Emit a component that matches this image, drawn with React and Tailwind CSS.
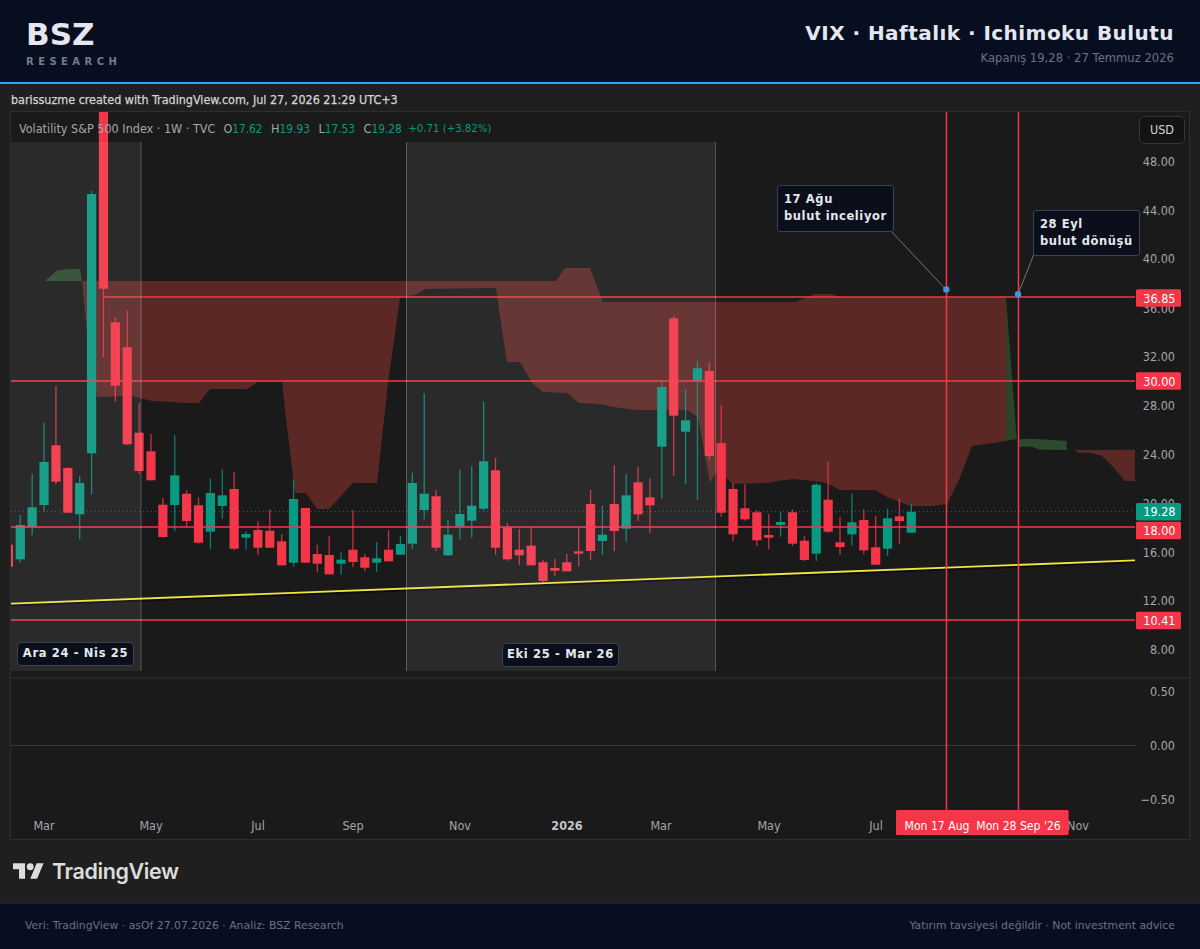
const C = [
["r",544.7,566.7,544.7,566.7,-1],
["g",525,559.3,515,562.7],["g",507.3,527,474,535],["g",462,505,422.7,511.7],["r",445.3,481.7,386,484.3],["r",468,512.7,467.3,512.7],["g",483,514.3,476,539.3],["g",194,453.3,190.7,494.3],["r",100,288.7,100,357.3],["r",322.3,385.7,317.3,401.7],["r",347.3,444.3,310.7,445],
["r",432.7,471,403,474],["r",451.3,480.3,434,480.3],["r",504.7,537,498,537.7],["g",475.3,505,435.3,531.3],["r",493.7,521,490.3,526.7],["r",505.3,542.7,497.3,543.7],["g",493,531.7,478.7,548.7],["g",495.3,506,469.3,518.7],["r",489,548.7,472,550.3],["g",534,537.7,531.3,549.3],
["r",530,547.7,521.3,555.3],["r",530.7,547.7,509.3,547.7],["r",541.3,565.3,534,565.3],["g",499,562.7,479.3,566.7],["r",508,562.7,508,562.7],["r",554,563.7,544.7,572],["r",555,574.3,536,574.3],["g",559.7,563.7,552.3,574.7],["r",549.7,562,510,567],["r",557.3,567.7,554,571.3],
["g",558.3,562.7,542,572],["r",549.7,561.3,530,561.3],["g",544,554.7,536,554.7],["g",483,543.7,472.7,549.3],["g",493.7,510,393.3,519.3],["r",496.3,547.7,490,551],["g",534.7,555.3,520,556],["g",514,526.7,469.3,539.7],["g",505.7,520.7,466,537.7],["g",461.3,508.7,401.7,510.7],
["r",470.3,547.7,457.7,554.7],["r",527.3,559.3,523.3,560.7],["r",549.7,555.3,529,565.3],["r",545.7,565.3,527.3,565.3],["r",562.3,581,560,584],["r",568,570.7,558.7,576],["r",562.3,571.3,554,571.3],["r",551.3,553.7,527.3,566.7],["r",504,551,490,560.3],["g",534.7,541,506,554.7],
["r",504,531,465.3,551],["g",495.3,528.7,474,541.7],["r",482.3,514.3,467,521],["r",497.3,505.3,478.3,532.7],["g",387,446.7,382,498.7],["r",318.3,415.7,316,475.7],["g",420.3,431.7,389.3,484.3],["g",368.3,380.7,361,499.7],["r",371,456,362.7,460],["r",443,512.7,405,516.7],
["r",489,534.3,483.3,541],["r",508.3,519.3,484,520.7],["r",512.3,540.3,510,546],["r",535,537.7,514,549.3],["g",522,525,511.7,536.7],["r",512.3,543.7,509.3,546],["r",540.7,560,536,561],["g",484.7,553.7,483.3,561],["r",499.7,531.7,462,532.7],["r",542.3,547,517,554.7],
["g",522.3,534.3,493.7,545.3],["r",520,550.3,509.3,553.7],["r",547.3,564.7,516,564.7],["g",518.3,548.7,508.7,556],["r",516.3,521,498.7,543.7],["g",511.7,532.7,504,532.7],
];

const CLOUD_RED = "82,281 556,281 565,268 590,268 603,302 795,302 815,294 832,294 840,297 1006,297 1006,441 972,446 959,480 947,504 933,506 910,506 900,502 887,497 875,490 840,490 827,483 813,481 793,479 777,481 767,483 733,484 717,470 710,483 698,417 687,410 637,410 613,407 600,404 579,403 567,393 543,392 532,383 520,362 507,362 500,317 496,288 425,289 415,295 407,296 400,298 388,383 377,483 353,483 329,509 317,509 306,493 295,493 285,410 282,382 258,382 247,389 210,389 199,403 185,403 173,402 152,401 140,398 132,396 97,397 88,343";

const AXIS = [["48.00",161],["44.00",210],["40.00",258],["36.00",308],["32.00",356],["28.00",405],["24.00",454],["20.00",503],["16.00",552],["12.00",600],["8.00",649],["0.50",691],["0.00",745],["−0.50",799]];
const TAGS = [["36.85",298,"#f53648"],["30.00",381,"#f53648"],["19.28",511.7,"#089981"],["18.00",530.5,"#f53648"],["10.41",620.5,"#f53648"]];
const TIME = [["Mar",44],["May",151],["Jul",258],["Sep",353],["Nov",460],["Mar",661],["May",769],["Jul",876],["Nov",1078]];
const HLINES = [[104,297],[11,381],[11,527],[11,620]];

function Candles() {
  return C.map((c, n) => {
    const x = 20.3 + 11.88 * (n - 1);
    const col = c[0] === "g" ? "#089981" : "#f53648";
    return (
      <g key={n}>
        <rect x={x - 0.65} y={c[3]} width={1.3} height={c[4] - c[3]} fill={col} opacity={0.8} />
        <rect x={x - 4.6} y={c[1]} width={9.2} height={c[2] - c[1]} fill={col} />
      </g>
    );
  });
}

function Plot() {
  return (
    <svg width="1178" height="727" viewBox="11 112 1178 727" className="block">
      <defs>
        <clipPath id="plot"><rect x="11" y="112" width="1124" height="566" /></clipPath>
      </defs>
      <g clipPath="url(#plot)">
        <polygon points="45,281 56.7,270.7 68,269 80,269 82,281" fill="#2d4a2f" />
        <polygon points={CLOUD_RED} fill="#5c2825" />
        <polygon points="1006,297 1016.7,439 1006,441" fill="#2b4429" />
        <polygon points="602,298 795,298 795,302 602,302" fill="#1c1c1c" />
        <polygon points="1018,439.3 1033,438.7 1066.7,441 1066.7,450 1040,449.7 1031.7,446.7 1018,446.7" fill="#2d4a2f" />
        <polygon points="1066.7,441 1076,450 1135,449.7 1135,481 1125,481 1113,466.7 1101.7,455.7 1090,452.7 1078,452.7" fill="#5c2825" />
        <Candles />
        <line x1="11" y1="511.7" x2="1135" y2="511.7" stroke="#089981" strokeWidth="1" strokeDasharray="1 3" opacity="0.8" />
        <line x1="11" y1="604.8" x2="1135" y2="561.5" stroke="#000" strokeWidth="3.5" opacity="0.55" />
        <line x1="11" y1="603.7" x2="1135" y2="560.4" stroke="#f1e63f" strokeWidth="1.8" />
        {HLINES.map(([x, y]) => (
          <line key={y} x1={x} y1={y} x2="1135" y2={y} stroke="#f53648" strokeWidth="1.6" />
        ))}
        <rect x="11" y="142" width="130" height="529" fill="#eef3ff" opacity="0.075" />
        <rect x="406" y="142" width="309.5" height="529" fill="#eef3ff" opacity="0.075" />
        <line x1="141" y1="142" x2="141" y2="671" stroke="#fff" strokeOpacity="0.24" />
        <line x1="406.5" y1="142" x2="406.5" y2="671" stroke="#fff" strokeOpacity="0.24" />
        <line x1="715.5" y1="142" x2="715.5" y2="671" stroke="#fff" strokeOpacity="0.24" />
      </g>
      <line x1="11" y1="678" x2="1189" y2="678" stroke="#333" />
      <line x1="11" y1="745.5" x2="1135" y2="745.5" stroke="#3a3a3a" />
      <line x1="946.5" y1="112" x2="946.5" y2="810" stroke="#f53648" strokeWidth="1.5" />
      <line x1="1018.5" y1="112" x2="1018.5" y2="810" stroke="#f53648" strokeWidth="1.5" />
      <line x1="889" y1="229" x2="946" y2="289.5" stroke="#8a8d94" strokeWidth="0.8" />
      <line x1="1034" y1="254" x2="1018" y2="294" stroke="#8a8d94" strokeWidth="0.8" />
      <circle cx="946.3" cy="289.5" r="3.2" fill="#3f93df" />
      <circle cx="1018" cy="294.3" r="3.2" fill="#3f93df" />
      <g fontSize="12.5" fill="#a3a6ab">
        {AXIS.map(([t, y]) => (
          <text key={t} x="1175" y={y + 4.5} textAnchor="end">{t}</text>
        ))}
      </g>
      {TAGS.map(([t, y, col]) => (
        <g key={t}>
          <rect x="1136" y={y - 8.7} width="45" height="17.4" rx="1.5" fill={col} />
          <text x="1175.5" y={y + 4.5} textAnchor="end" fontSize="12.5" fontWeight="500" fill="#fff">{t}</text>
        </g>
      ))}
      <g fontSize="12.5" fill="#a3a6ab">
        {TIME.map(([t, x]) => (
          <text key={t + x} x={x} y="829.5" textAnchor="middle">{t}</text>
        ))}
        <text x="567" y="829.5" textAnchor="middle" fontWeight="700" fill="#c4c6ca">2026</text>
      </g>
      <rect x="896" y="810" width="172.6" height="25" rx="1.5" fill="#f53648" />
      <g fontSize="12.1" fill="#fff" textAnchor="middle">
        <text x="937" y="829.5">Mon 17 Aug</text>
        <text x="1018.5" y="829.5">Mon 28 Sep '26</text>
      </g>
    </svg>
  );
}

const noteCls = "absolute box-border rounded-[3px] border border-[#3a4150] bg-[#0a0f1b] px-[6px] pt-[5px] font-['DejaVu_Sans'] text-[11.5px] leading-[17px] font-bold tracking-[0.6px] text-[#e6e8ee]";
const rangeCls = "absolute box-border flex h-[24px] w-[117px] items-center justify-center rounded-[4px] border border-[#3a4150] bg-[#0a0f1b] font-['DejaVu_Sans'] text-[11.5px] font-bold tracking-[0.65px] whitespace-pre text-[#e6e8ee]";

export default function App() {
  return (
    <div className="flex h-[949px] w-[1200px] flex-col overflow-hidden bg-[#1f1f1f] font-['DejaVu_Sans',sans-serif]">
      <header className="box-border flex h-[84px] shrink-0 items-start justify-between border-b-2 border-[#3aa0ee] bg-[#070e20] pr-[26px] pl-[26px]">
        <div className="pt-[16px]">
          <div className="text-[31px] leading-[36px] font-bold text-[#e4e7ef]">BSZ</div>
          <div className="mt-[3px] text-[10px] leading-[14px] font-bold tracking-[4.45px] text-[#747b8d]">RESEARCH</div>
        </div>
        <div className="flex flex-col items-end pt-[20px]">
          <div className="text-[20px] leading-[26px] font-bold tracking-[0.45px] text-[#e4e7ef]">VIX · Haftalık · Ichimoku Bulutu</div>
          <div className="mt-[5px] text-[11.6px] leading-[14px] text-[#6b7280]">Kapanış 19,28 · 27 Temmuz 2026</div>
        </div>
      </header>

      <main className="flex flex-1 flex-col px-[10px] font-['DejaVu_Sans_Condensed','DejaVu_Sans',sans-serif]">
        <div className="h-[27px] pt-[8px] pl-[1px] text-[12.45px] leading-[16px] text-[#d4d4d4] [-webkit-text-stroke:0.25px_#d4d4d4]">barissuzme created with TradingView.com, Jul 27, 2026 21:29 UTC+3</div>
        <div className="relative box-border h-[729px] w-[1180px] border border-[#2e2e2e] bg-[#1a1a1a]">
          <Plot />
          <div className="absolute top-[9px] left-[8px] flex gap-[8px] text-[12.5px] leading-[16px] whitespace-pre text-[#a3a6ab]">
            <span>Volatility S&amp;P 500 Index · 1W · TVC</span>
            <span className="flex items-center gap-[8.5px]">
              <span>O<span className="text-[11.8px] text-[#089981]">17.62</span></span>
              <span>H<span className="text-[11.8px] text-[#089981]">19.93</span></span>
              <span>L<span className="text-[11.8px] text-[#089981]">17.53</span></span>
              <span>C<span className="text-[11.8px] text-[#089981]">19.28</span></span>
              <span className="-ml-[2px] text-[11.3px] text-[#089981]">+0.71 (+3.82%)</span>
            </span>
          </div>
          <div className="absolute top-[4px] left-[1128px] box-border flex h-[28px] w-[46px] items-center justify-center rounded-[5px] border border-[#343434] bg-[#131313] text-[12.5px] text-[#d4d4d4]">USD</div>
          <div className={noteCls + " top-[73px] left-[766px] h-[47px] w-[117px]"}>17 Ağu<br />bulut inceliyor</div>
          <div className={noteCls + " top-[98px] left-[1022px] h-[46px] w-[107px]"}>28 Eyl<br />bulut dönüşü</div>
          <div className={rangeCls + " top-[530px] left-[6px]"}>Ara 24 - Nis 25</div>
          <div className={rangeCls + " top-[531px] left-[491px]"}>Eki 25 - Mar 26</div>
        </div>
        <div className="flex items-center gap-[8px] pt-[18px] pl-[3px]">
          <svg width="31" height="18" viewBox="0 3 36 20" fill="#dcdcdc"><path d="M14 22H7V11H0V4h14v18zM28 22h-8l7.5-18h8L28 22z" /><circle cx="20" cy="8" r="4" /></svg>
          <span className="font-['Inter'] text-[21.5px] leading-[26px] font-semibold tracking-[-0.4px] text-[#dcdcdc]">TradingView</span>
        </div>
      </main>

      <footer className="box-border flex h-[46px] shrink-0 items-center justify-between border-t border-[#18233c] bg-[#080e20] px-[25px] text-[10.85px] text-[#6b7280]">
        <span>Veri: TradingView · asOf 27.07.2026 · Analiz: BSZ Research</span>
        <span>Yatırım tavsiyesi değildir · Not investment advice</span>
      </footer>
    </div>
  );
}
